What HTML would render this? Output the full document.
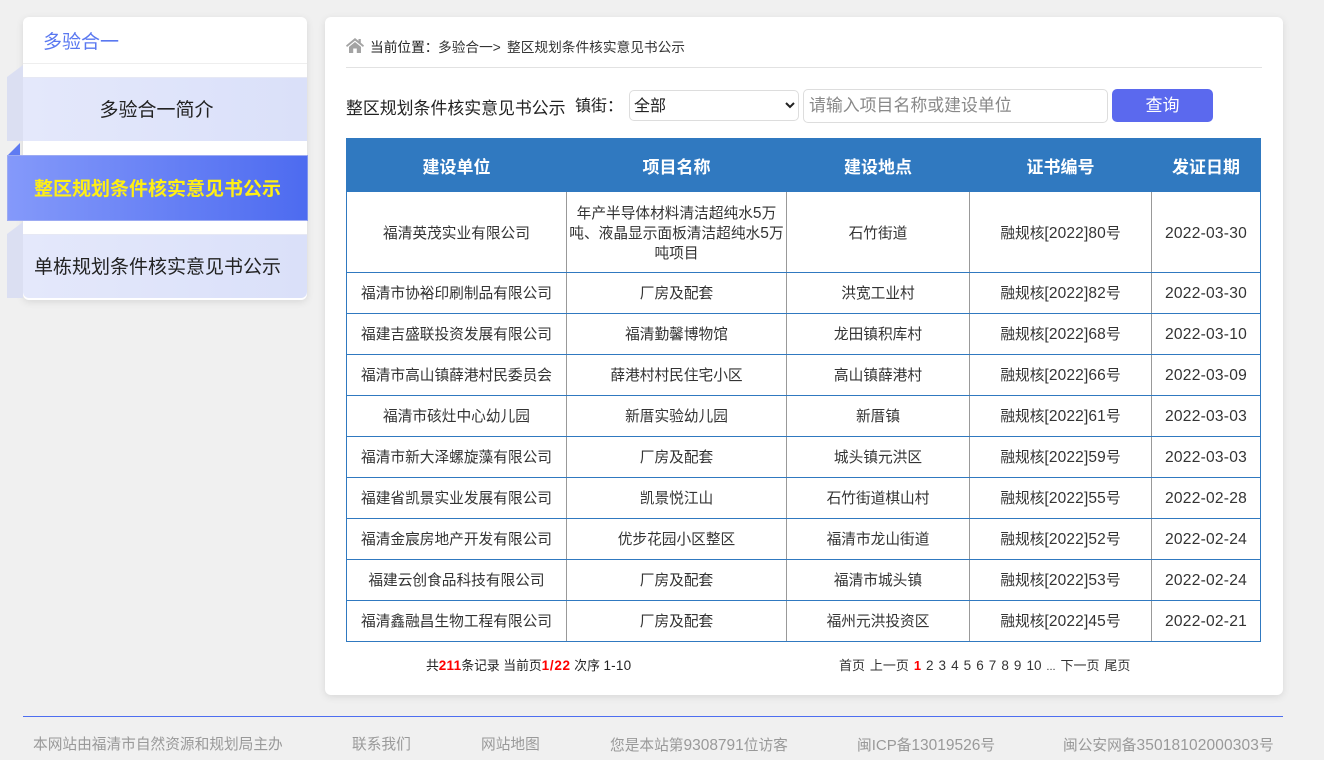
<!DOCTYPE html>
<html lang="zh"><head><meta charset="utf-8"><style>
*{box-sizing:border-box}
html,body{margin:0;padding:0;width:1324px;height:760px;overflow:hidden;background:#f0f0f0;font-family:"Liberation Sans","Noto Sans CJK SC",sans-serif;color:#333}
.a{position:absolute;white-space:nowrap}
.card{background:#fff;border-radius:6px;box-shadow:0 2px 8px rgba(0,0,0,.1)}
table{border-collapse:collapse;table-layout:fixed;position:absolute;left:346px;top:138px;width:914px}
th{background:#3079c0;color:#fff;font-size:17px;height:53px;font-weight:bold;border:1px solid #3079c0;padding:0}
td{border:1px solid #999;border-top:1px solid #3079c0;border-bottom:1px solid #3079c0;text-align:center;font-size:14.7px;height:41px;padding:2px 0 0;color:#333;line-height:20px;white-space:nowrap}
td:first-child{border-left:1px solid #3079c0}
td:last-child{border-right:1px solid #3079c0;font-size:15.600px;letter-spacing:.22px}
td i{font-style:normal;font-size:15.500px;letter-spacing:.15px}
.r1 td{padding-top:4px}
.item{left:23px;width:284px;height:64px;background:linear-gradient(90deg,#e4e8fb,#dae0f9);font-size:19px;line-height:65px;color:#222;border-top:1px solid #e6e8f4}
.side{left:7px;width:16px;background:#dbdff2}
.f{top:735px;font-size:14.7px;color:#999;line-height:21px}
.f i{font-style:normal;font-size:15.500px}
.p i{font-style:normal;font-size:13.500px;letter-spacing:.2px}
.p b{font-size:13.500px;letter-spacing:.25px}
</style></head><body>
<div class="a card" style="left:23px;top:17px;width:284px;height:283px"></div>
<div class="a" style="left:43px;top:30px;font-size:19px;line-height:26px;color:#5a78f0">多验合一</div>
<div class="a" style="left:23px;top:63px;width:284px;height:1px;background:#eee"></div>

<div class="a side" style="top:77px;height:64px"></div>
<svg class="a" style="left:7px;top:65px" width="16" height="12"><path d="M0 12L16 0V12Z" fill="#dbdff2"/></svg>
<div class="a item" style="top:77px;text-align:center;padding-right:17px">多验合一简介</div>

<svg class="a" style="left:7px;top:143px" width="14" height="13"><path d="M0 13L13 0V13Z" fill="#5f7bf2"/></svg>
<div class="a" style="left:7px;top:155px;width:301px;height:66px;background:linear-gradient(90deg,#8499fa,#4d6bf0);border:1px solid #9dabf2;border-right-color:#7f93ee;font-size:19px;line-height:68px;font-weight:bold;color:#ffef14;padding-left:26px">整区规划条件核实意见书公示</div>

<div class="a side" style="top:234px;height:64px"></div>
<svg class="a" style="left:7px;top:222px" width="16" height="12"><path d="M0 12L16 0V12Z" fill="#dbdff2"/></svg>
<div class="a item" style="top:234px;padding-left:11px;border-radius:0 0 6px 6px">单栋规划条件核实意见书公示</div>

<div class="a card" style="left:325px;top:17px;width:958px;height:678px"></div>
<svg class="a" style="left:346px;top:38px" width="18" height="15" viewBox="0 0 18 15"><path d="M9 0L0 7.500L1 9L9 2.600L17 9L18 7.500L14.800 4.800V1H12.500V2.900ZM9 4L3 8.900V15H7.200V10.500H10.800V15H15V8.900Z" fill="#a3a3a3"/></svg>
<div class="a" style="left:370px;top:38px;font-size:13.7px;line-height:20px;color:#222">当前位置：</div>
<div class="a" style="left:438px;top:38px;font-size:13.7px;line-height:20px;color:#333">多验合一&gt; </div>
<div class="a" style="left:507px;top:38px;font-size:13.7px;line-height:20px;color:#333">整区规划条件核实意见书公示</div>
<div class="a" style="left:346px;top:67px;width:916px;height:1px;background:#e2e2e2"></div>

<div class="a" style="left:346px;top:97px;font-size:16.900px;line-height:24px;color:#222">整区规划条件核实意见书公示</div>
<div class="a" style="left:575px;top:95px;font-size:16px;line-height:24px;color:#222">镇街：</div>
<select class="a" style="left:629px;top:90px;width:170px;height:31px;border:1px solid #ddd;border-radius:5px;background:#fff;font-size:16px;font-family:inherit;color:#222;padding:2px 0 0"><option>全部</option></select>
<div class="a" style="left:803px;top:89px;width:305px;height:34px;border:1px solid #ddd;border-radius:5px;background:#fff;font-size:16.900px;line-height:31px;color:#888;padding-left:5px">请输入项目名称或建设单位</div>
<div class="a" style="left:1112px;top:89px;width:101px;height:33px;border-radius:5px;background:#5b69ee;color:#fff;font-size:17px;line-height:34px;text-align:center">查询</div>

<table>
<colgroup><col style="width:220px"><col style="width:220px"><col style="width:183px"><col style="width:182px"><col style="width:109px"></colgroup>
<tr><th>建设单位</th><th>项目名称</th><th>建设地点</th><th>证书编号</th><th>发证日期</th></tr>
<tr class="r1" style="height:81px"><td>福清英茂实业有限公司</td><td>年产半导体材料清洁超纯水<i>5</i>万<br>吨、液晶显示面板清洁超纯水<i>5</i>万<br>吨项目</td><td>石竹街道</td><td>融规核<i>[2022]80</i>号</td><td>2022-03-30</td></tr>
<tr><td>福清市协裕印刷制品有限公司</td><td>厂房及配套</td><td>洪宽工业村</td><td>融规核<i>[2022]82</i>号</td><td>2022-03-30</td></tr>
<tr><td>福建吉盛联投资发展有限公司</td><td>福清勤馨博物馆</td><td>龙田镇积库村</td><td>融规核<i>[2022]68</i>号</td><td>2022-03-10</td></tr>
<tr><td>福清市高山镇薛港村民委员会</td><td>薛港村村民住宅小区</td><td>高山镇薛港村</td><td>融规核<i>[2022]66</i>号</td><td>2022-03-09</td></tr>
<tr><td>福清市硋灶中心幼儿园</td><td>新厝实验幼儿园</td><td>新厝镇</td><td>融规核<i>[2022]61</i>号</td><td>2022-03-03</td></tr>
<tr><td>福清市新大泽螺旋藻有限公司</td><td>厂房及配套</td><td>城头镇元洪区</td><td>融规核<i>[2022]59</i>号</td><td>2022-03-03</td></tr>
<tr><td>福建省凯景实业发展有限公司</td><td>凯景悦江山</td><td>石竹街道棋山村</td><td>融规核<i>[2022]55</i>号</td><td>2022-02-28</td></tr>
<tr><td>福清金宸房地产开发有限公司</td><td>优步花园小区整区</td><td>福清市龙山街道</td><td>融规核<i>[2022]52</i>号</td><td>2022-02-24</td></tr>
<tr><td>福建云创食品科技有限公司</td><td>厂房及配套</td><td>福清市城头镇</td><td>融规核<i>[2022]53</i>号</td><td>2022-02-24</td></tr>
<tr><td>福清鑫融昌生物工程有限公司</td><td>厂房及配套</td><td>福州元洪投资区</td><td>融规核<i>[2022]45</i>号</td><td>2022-02-21</td></tr>
</table>

<div class="a p" style="left:426px;top:656px;font-size:12.800px;line-height:20px;color:#222">共<b style="color:#f00">211</b>条记录 当前页<b style="color:#f00;letter-spacing:.7px">1/22</b> 次序 <i>1-10</i></div>
<div class="a" style="left:839px;top:656px;font-size:13px;line-height:20px;color:#333;word-spacing:1.300px">首页 上一页 <b style="color:#f00">1</b> <span style="font-size:13.500px;word-spacing:1.300px">2 3 4 5 6 7 8 9 10</span> <span style="font-size:11px">...</span> 下一页 尾页</div>

<div class="a" style="left:23px;top:716px;width:1260px;height:1px;background:#4d6ef0"></div>
<div class="a f" style="left:33px">本网站由福清市自然资源和规划局主办</div>
<div class="a f" style="left:352px">联系我们</div>
<div class="a f" style="left:481px">网站地图</div>
<div class="a f" style="left:610px">您是本站第<i>9308791</i>位访客</div>
<div class="a f" style="left:857px">闽<i style="font-size:15px">ICP</i>备<i>13019526</i>号</div>
<div class="a f" style="left:1063px">闽公安网备<i style="letter-spacing:.13px">35018102000303</i>号</div>
</body></html>
